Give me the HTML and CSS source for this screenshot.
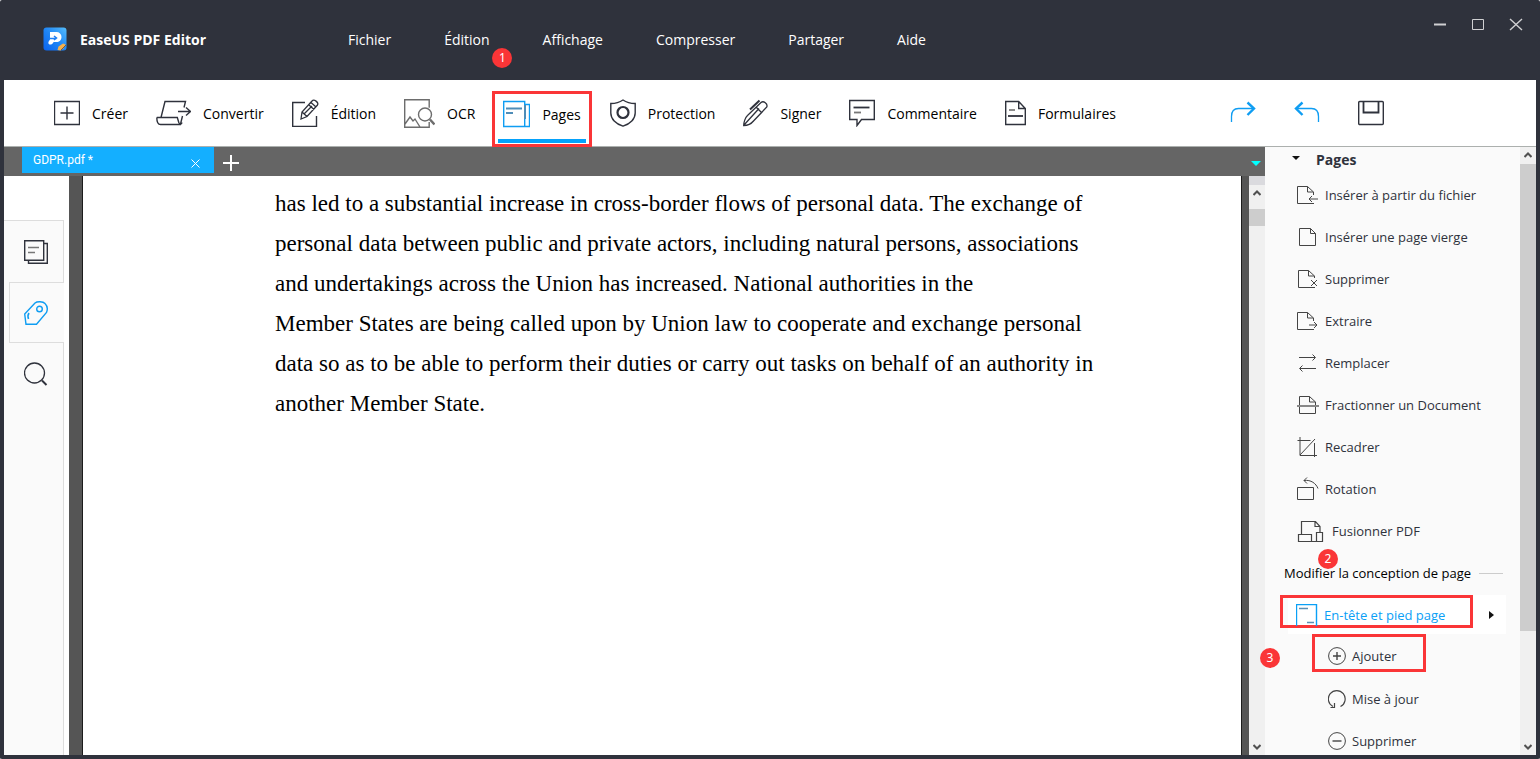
FILE: index.html
```html
<!DOCTYPE html>
<html lang="fr">

<head>
    <meta charset="UTF-8">
    <title>EaseUS PDF Editor</title>
    <link rel="stylesheet" href="styles.css">
</head>

<body>
    <div class="window">

        <header class="titlebar">
            <svg class="logo" width="24" height="24" viewBox="0 0 24 24">
                <defs>
                    <linearGradient id="logoBlue" x1="1" y1="0" x2="0" y2="1">
                        <stop offset="0" stop-color="#55bdfb"/>
                        <stop offset="0.5" stop-color="#1f86f5"/>
                        <stop offset="1" stop-color="#0b63ee"/>
                    </linearGradient>
                </defs>
                <rect x="0.5" y="0.5" width="23" height="23" rx="3" fill="url(#logoBlue)"/>
                <path d="M7 5h6.500a5 5 0 0 1 5 5c0 3-2.200 5-5 5H11c-1 0-1 2.500-3.500 2.500S5 15.500 6 14l1-1.500z" fill="#fff"/>
                <path d="M6 11.500h7.500M11 9l2.500 2-2.500 2" fill="none" stroke="#1f7ff3" stroke-width="1.500"/>
                <path d="M14.500 23l1-3.500 4.500-3 2.500 1-2 4-3 2z" fill="#f5b04c"/>
                <path d="M18 23l5-5" stroke="#7b5a3a" stroke-width="1"/>
            </svg>
            <h1 class="app-name">EaseUS PDF Editor</h1>
            <nav class="menu">
                <button>Fichier</button>
                <button>Édition</button>
                <button>Affichage</button>
                <button>Compresser</button>
                <button>Partager</button>
                <button>Aide</button>
            </nav>
            <div class="window-controls">
                <button aria-label="Réduire">
                    <svg width="14" height="14" viewBox="0 0 14 14"><path d="M1 7.500h12" stroke-width="2"/></svg>
                </button>
                <button aria-label="Agrandir">
                    <svg width="14" height="14" viewBox="0 0 14 14"><path d="M1.500 2.500h11v10h-11z"/></svg>
                </button>
                <button aria-label="Fermer">
                    <svg width="14" height="14" viewBox="0 0 14 14"><path d="M1 2l12 11M13 2L1 13" stroke-width="1.400"/></svg>
                </button>
            </div>
        </header>

        <div class="toolbar">
            <div class="tools">
                <button class="tool">
                    <svg width="26" height="28" viewBox="0 0 26 28"><path d="M.5 2.500h25v23H.5zM13 7.500v13M6.500 14h13" stroke-width="1.400"/></svg>
                    Créer
                </button>
                <button class="tool">
                    <svg width="35" height="28" viewBox="0 0 35 28"><path d="M5 18.500L9 2.500h20.500l-1.500 6M26.500 17l-2 8M.8 18.500h20.500l1.500 5c.8 2 2.700 2 3.200 0M.8 18.500c0 4 1.200 7 3.700 7H25M22 12.500h12M30 8.500l4.500 4-4.500 4" stroke-width="1.400"/></svg>
                    Convertir
                </button>
                <button class="tool">
                    <svg width="27" height="28" viewBox="0 0 27 28"><path d="M13 3.500H.7v24h23.800V17" stroke-width="1.400"/><path d="M9 20l1-7L20 2c2-2.500 7 1.500 5.500 4L15 17.500zM10 13l5 4.500M19 3.500l5 4.500M17 6l5 4.500M12 15l8-8" stroke-width="1.300"/></svg>
                    Édition
                </button>
                <button class="tool">
                    <svg width="31" height="30" viewBox="0 0 31 30" class="soft"><path d="M17 29.300H.7V1.700h24.500v8M25.200 24v5.300H17M1 26l5-7 3 4 2-2 5 8" stroke-width="1.400"/><circle cx="21" cy="16.500" r="6.500" stroke-width="1.400"/><path d="M26 21.500l4.500 5" stroke-width="2.500"/></svg>
                    OCR
                </button>
                <div class="tool-slot">
                    <button class="tool active">
                        <svg width="27" height="28" viewBox="0 0 27 28"><path d="M.7 1.500h21v25H.7zM22 4.500h4.500v22H20" stroke-width="1.400"/><path d="M3 8.500h16M3 13h7" stroke="#4f8db8" stroke-width="2"/><path d="M22 5v14" stroke="#4f8db8" stroke-width="2"/></svg>
                        Pages
                    </button>
                    <span class="badge badge-1">1</span>
                </div>
                <button class="tool">
                    <svg width="26" height="28" viewBox="0 0 26 28"><path d="M13 1C9 3.800 5 4.500.8 4.500V14c0 6 5 11 12.200 13.200C20.200 25 25.200 20 25.200 14V4.500C21 4.500 17 3.800 13 1z" stroke-width="1.400"/><circle cx="13" cy="13.500" r="5.500" stroke-width="2.200"/></svg>
                    Protection
                </button>
                <button class="tool">
                    <svg width="25" height="28" viewBox="0 0 25 28"><path d="M.7 26.500c0-3 1.500-8 3.800-10L18 3.500c2.500-2 7 1 5.800 4.500L10.500 22c-2 2.500-6.500 4.500-9.800 4.500zM1 26L16 9.500M13 8l5.500 5.500" stroke-width="1.300"/><path d="M7 10.500L16.500 1.500" stroke-width="2"/></svg>
                    Signer
                </button>
                <button class="tool">
                    <svg width="26" height="28" viewBox="0 0 26 28"><path d="M.7 1.500h24.600v19H12.500L8 26.500v-6H.7z" stroke-width="1.400"/><path d="M4.500 8.500h16" stroke-width="1.800"/><path d="M5 13.500h7" stroke-width="1.800" stroke="#777"/></svg>
                    Commentaire
                </button>
                <button class="tool">
                    <svg width="21" height="28" viewBox="0 0 21 28"><path d="M.7 2.500h13l6.600 7v16H.7zM13.700 2.500v7h6.600" stroke-width="1.400"/><path d="M4 11h6" stroke="#666" stroke-width="1.500"/><path d="M3 17h15" stroke-width="1.800"/></svg>
                    Formulaires
                </button>
            </div>
            <div class="quick">
                <button aria-label="Rétablir" class="blue">
                    <svg width="26" height="28" viewBox="0 0 26 28"><path d="M1.500 23v-5.500c0-5 2.500-8 7-8H24" stroke-width="1.300"/><path d="M17.500 3.500l6.500 6-6.500 6.500" stroke-width="2.400"/></svg>
                </button>
                <button aria-label="Annuler" class="blue">
                    <svg width="26" height="28" viewBox="0 0 26 28"><path d="M24.500 23v-5.500c0-5-2.500-8-7-8H2" stroke-width="1.300"/><path d="M8.500 3.500L2 9.500 8.500 16" stroke-width="2.400"/></svg>
                </button>
                <button aria-label="Enregistrer">
                    <svg width="26" height="28" viewBox="0 0 26 28"><rect x=".7" y="2.500" width="24.600" height="23" rx="1" stroke-width="1.400"/><path d="M5.500 2.500v11h15v-11" stroke-width="1.800"/></svg>
                </button>
            </div>
        </div>

        <main class="workspace">
            <section class="viewer">
                <div class="tabs">
                    <div class="tab">
                        <span>GDPR.pdf *</span>
                        <button aria-label="Fermer l'onglet">
                            <svg width="9" height="9" viewBox="0 0 9 9"><path d="M.5.5l8 8M8.500.5l-8 8"/></svg>
                        </button>
                    </div>
                    <button class="new-tab" aria-label="Nouvel onglet">
                        <svg width="16" height="16" viewBox="0 0 16 16"><path d="M8 0v16M0 8h16" stroke-width="2"/></svg>
                    </button>
                    <button class="tab-list" aria-label="Liste des onglets">
                        <svg width="10" height="5" viewBox="0 0 10 5"><path d="M0 0h10L5 5z"/></svg>
                    </button>
                </div>

                <div class="document">
                    <nav class="sidebar">
                        <button aria-label="Vignettes">
                            <svg width="24" height="24" viewBox="0 0 24 24"><path d="M.7.7h19v19.600H.7zM20 3.500h3.300v19.800H4.500V20.500" stroke-width="1.400"/><path d="M4 7.500h11M4 12.500h7" stroke="#777" stroke-width="1.500"/></svg>
                        </button>
                        <button aria-label="Signets" class="selected">
                            <svg width="24" height="24" viewBox="0 0 24 24"><path d="M2 23.300L.7 13 11 2c2-1.800 8-1.800 10 .5 2.500 2.500 2.500 6.500 1.500 9L12.500 23.300z" stroke-width="1.400"/><circle cx="15.500" cy="8" r="2.800" stroke-width="1.400"/><path d="M5 12c-1.500 2-1.200 4-.5 6" stroke-width="1.600"/></svg>
                        </button>
                        <button aria-label="Rechercher">
                            <svg width="24" height="24" viewBox="0 0 24 24"><circle cx="10.500" cy="11" r="10" stroke-width="1.300"/><path d="M18 18.500l4.500 4.500" stroke-width="2"/></svg>
                        </button>
                    </nav>
                    <article class="page">
                        <p>
                            has led to a substantial increase in cross-border flows of personal data. The exchange of<br>
                            personal data between public and private actors, including natural persons, associations<br>
                            and undertakings across the Union has increased. National authorities in the<br>
                            Member States are being called upon by Union law to cooperate and exchange personal<br>
                            data so as to be able to perform their duties or carry out tasks on behalf of an authority in<br>
                            another Member State.
                        </p>
                    </article>
                    <div class="scrollbar doc-scroll">
                        <button aria-label="Défiler vers le haut"><svg width="8" height="6" viewBox="0 0 8 6"><path d="M.5 5L4 1.500 7.500 5"/></svg></button>
                        <div class="thumb"></div>
                        <button aria-label="Défiler vers le bas" class="down"><svg width="8" height="6" viewBox="0 0 8 6"><path d="M.5 1L4 4.500 7.500 1"/></svg></button>
                    </div>
                </div>
            </section>

            <aside class="panel">
                <div class="panel-content">
                    <h2 class="panel-title">
                        <svg width="8" height="10" viewBox="0 0 8 10"><path d="M0 1h8L4 5z"/></svg>
                        Pages
                    </h2>
                    <button class="item">
                        <svg width="22" height="20" viewBox="0 0 22 20"><path d="M17 18.500H.5V1.500h10L16.500 7v3M10.500 1.500V7h6M12 14h9M15 11l-3 3 3 3"/></svg>
                        Insérer à partir du fichier
                    </button>
                    <button class="item">
                        <svg width="22" height="20" viewBox="0 0 22 20"><path d="M2.500 1.500h11l5 5v12h-16zM13.500 1.500v5h5"/></svg>
                        Insérer une page vierge
                    </button>
                    <button class="item">
                        <svg width="22" height="20" viewBox="0 0 22 20"><path d="M18 18.500H1.500V1.500h10l6 5.500v2M11.500 1.500V7h6M14 11l6 6M20 11l-6 6"/></svg>
                        Supprimer
                    </button>
                    <button class="item">
                        <svg width="22" height="20" viewBox="0 0 22 20"><path d="M17 18.500H.5V1.500h10L16.500 7v3M10.500 1.500V7h6M12 14h8M17 11l3 3-3 3"/></svg>
                        Extraire
                    </button>
                    <button class="item">
                        <svg width="22" height="20" viewBox="0 0 22 20"><path d="M2 4.500h16M15.500 1.500l3 3-3 3M3 15.500h16M5.500 12.500l-3 3 3 3"/></svg>
                        Remplacer
                    </button>
                    <button class="item">
                        <svg width="22" height="20" viewBox="0 0 22 20"><path d="M2.500 1.500h10l6 5.500v11.500h-16zM12.500 1.500V7h6"/><path d="M0 11h22" stroke="#888" stroke-width="2"/></svg>
                        Fractionner un Document
                    </button>
                    <button class="item">
                        <svg width="22" height="22" viewBox="0 0 22 22"><path d="M3 1v18.500h17M.5 4.500h13M17.500 7v14M3 19L18 3"/></svg>
                        Recadrer
                    </button>
                    <button class="item">
                        <svg width="22" height="24" viewBox="0 0 22 24"><path d="M.5 10.500h16v12H.5zM7 3.500c7-1 12 3 14 8M10 .5L7 3.500l3 3"/></svg>
                        Rotation
                    </button>
                    <button class="item">
                        <svg width="29" height="24" viewBox="0 0 29 24"><path d="M4.500 15V2.500h14l4.500 5v6M18 2.500v5h5M1.500 15.500h13v7h-13zM14.500 22.500h5v-9h6v9h-6" stroke-width="1.200"/></svg>
                        Fusionner PDF
                    </button>

                    <h3 class="group-title">
                        Modifier la conception de page
                        <span class="badge badge-2">2</span>
                    </h3>

                    <div class="expanded">
                        <button class="item current">
                            <svg width="22" height="22" viewBox="0 0 22 22"><path d="M.5 22V.5h20V22" stroke-width="1.400"/><path d="M3 4.500h9M11 18.500h7" stroke="#5a8fb5" stroke-width="1.600"/></svg>
                            En-tête et pied page
                        </button>
                        <svg class="arrow" width="5" height="8" viewBox="0 0 5 8"><path d="M0 0v8l5-4z"/></svg>
                    </div>

                    <div class="sub-slot">
                        <button class="item sub">
                            <svg width="18" height="18" viewBox="0 0 18 18"><circle cx="9" cy="9" r="8.400"/><path d="M9 5v8M5 9h8" stroke-width="1.400"/></svg>
                            Ajouter
                        </button>
                        <span class="badge badge-3">3</span>
                    </div>
                    <button class="item sub">
                        <svg width="18" height="20" viewBox="0 0 18 20"><path d="M12.500 17.500A8.400 8.400 0 1 0 5 17.500M6.500 14v4.500H2.500" stroke-width="1.200"/></svg>
                        Mise à jour
                    </button>
                    <button class="item sub">
                        <svg width="18" height="18" viewBox="0 0 18 18"><circle cx="9" cy="9" r="8.400"/><path d="M4.500 9h9" stroke-width="1.400"/></svg>
                        Supprimer
                    </button>
                </div>
                <div class="scrollbar panel-scroll">
                    <button aria-label="Défiler vers le haut"><svg width="8" height="6" viewBox="0 0 8 6"><path d="M.5 5L4 1.500 7.500 5"/></svg></button>
                    <div class="thumb"></div>
                    <button aria-label="Défiler vers le bas" class="down"><svg width="8" height="6" viewBox="0 0 8 6"><path d="M.5 1L4 4.500 7.500 1"/></svg></button>
                </div>
            </aside>
        </main>
    </div>
</body>

</html>
```
FILE: styles.css
```css
* {
    box-sizing: border-box;
}

body {
    margin: 0;
    font-family: "Open Sans", "Noto Sans", sans-serif;
    font-size: 14px;
    color: #000;
}

button {
    padding: 0;
    border: none;
    background: none;
    font: inherit;
    color: inherit;
    white-space: nowrap;
    cursor: pointer;
}

svg {
    display: block;
    flex: none;
    fill: none;
    stroke: #2f323c;
}

.window {
    display: flex;
    flex-direction: column;
    height: 100vh;
    border: 4px solid #2f323c;
    border-top: none;
    border-radius: 2px;
    background: #fff;
    overflow: hidden;
}

/* title bar */
.titlebar {
    display: flex;
    align-items: center;
    flex: none;
    height: 80px;
    padding: 0 13px 2px 39px;
    background: #2f323c;
    color: #fff;
}

.logo {
    stroke: none;
}

.app-name {
    width: 281px;
    margin: 0;
    padding-left: 13px;
    font-size: 14px;
    font-weight: 700;
}

.menu {
    display: flex;
    gap: 53px;
    flex: 1;
}

.window-controls {
    display: flex;
    gap: 24px;
    align-self: flex-start;
    padding-top: 17px;
}

.window-controls svg {
    stroke: #d0d0d2;
}

/* toolbar */
.toolbar {
    display: flex;
    justify-content: space-between;
    flex: none;
    height: 67px;
    padding: 0 152px 0 50px;
    border-bottom: 1px solid #acb0ae;
}

.tools {
    display: flex;
    align-items: center;
    gap: 28px;
}

.tool {
    display: flex;
    align-items: center;
    gap: 12px;
}

.soft {
    stroke: #6d6d6d;
}

.tool-slot {
    position: relative;
    align-self: flex-end;
    margin: 0 -10px -1px -11px;
    border: 3px solid #fa3537;
}

.tool.active {
    height: 49px;
    margin: 0 3px 1px;
    padding: 0 5px 5px;
    border-bottom: 4px solid #05a2fb;
}

.active svg,
.blue svg,
.selected svg,
.current svg {
    stroke: #0f9df2;
}

.quick {
    display: flex;
    align-items: center;
    gap: 38px;
}

.badge {
    position: absolute;
    width: 20px;
    height: 20px;
    border-radius: 50%;
    background: #fa3537;
    color: #fff;
    font-family: "Noto Sans", sans-serif;
    font-size: 12px;
    font-weight: 400;
    line-height: 20px;
    text-align: center;
}

.badge-1 {
    top: -46px;
    left: -3px;
}

.badge-2 {
    top: -3px;
    left: 34px;
}

.badge-3 {
    top: 14px;
    left: -5px;
}

/* workspace */
.workspace {
    display: flex;
    flex: 1;
    min-height: 0;
}

.viewer {
    display: flex;
    flex-direction: column;
    flex: 1;
    min-width: 0;
}

.tabs {
    display: flex;
    flex: none;
    height: 29px;
    padding-left: 18px;
    background: #656565;
}

.tab {
    display: flex;
    justify-content: space-between;
    width: 192px;
    height: 26px;
    padding: 0 14px 0 11px;
    background: #14afff;
    color: #fff;
    font-family: Roboto, sans-serif;
    font-size: 12px;
    line-height: 26px;
}

.tabs svg {
    stroke: #fff;
}

.tab button {
    padding-top: 6px;
}

.new-tab {
    margin-left: 9px;
    padding-top: 2px;
}

.tab-list {
    margin-left: auto;
    padding: 4px 4px 0 0;
}

.tab-list svg {
    fill: #0ff;
    stroke: none;
}

.document {
    display: flex;
    flex: 1;
    min-height: 0;
    background: #555;
}

.sidebar {
    display: flex;
    flex-direction: column;
    width: 65px;
    padding-top: 45px;
    background: linear-gradient(#fff 44px, #ddd 44px, #ddd 45px, #fafafa 45px);
    border-right: 5px solid #fff;
}

.sidebar::after {
    content: "";
    flex: 1;
    border-right: 1px solid #ddd;
}

.sidebar button {
    display: flex;
    align-items: center;
    width: 60px;
    height: 61px;
    padding-left: 20px;
    border-right: 1px solid #ddd;
}

.sidebar .selected {
    width: 55px;
    margin-left: 5px;
    padding-left: 14px;
    border: 1px solid #ddd;
    border-right: none;
}

.page {
    flex: 1;
    margin: 0 7px 0 13px;
    padding-left: 192px;
    border: solid #1c1c1c;
    border-width: 0 1px;
    background: #fff;
    font-family: "Liberation Serif", serif;
    font-size: 23px;
    line-height: 40px;
    white-space: nowrap;
}

.page p {
    margin: 8px 0;
}

.scrollbar {
    display: flex;
    flex-direction: column;
    flex: none;
    width: 16px;
    background: #f0f0f0;
}

.scrollbar button {
    display: flex;
    align-items: center;
    justify-content: center;
    height: 16px;
}

.scrollbar svg {
    stroke: #505050;
    stroke-width: 2;
}

.scrollbar .down {
    margin-top: auto;
}

.thumb {
    background: #cdcdcd;
}

.doc-scroll {
    border-top: 9px solid #dadade;
}

.doc-scroll .thumb {
    height: 17px;
    margin-top: 8px;
}

/* right panel */
.panel {
    display: flex;
    width: 271px;
    background: #fafafa;
}

.panel-content {
    flex: 1;
    height: 0;
}

.panel-title {
    display: flex;
    align-items: center;
    gap: 16px;
    height: 27px;
    margin: 0;
    padding: 0 0 2px 27px;
    color: #2f323c;
    font-size: 14px;
}

.panel-title svg,
.arrow {
    fill: #111;
    stroke: none;
}

.item {
    display: flex;
    align-items: center;
    gap: 6px;
    height: 42px;
    padding-left: 32px;
    color: #2f323c;
    font-size: 13px;
}

.item svg {
    stroke: #444;
}

.group-title {
    display: flex;
    align-items: center;
    gap: 8px;
    position: relative;
    height: 42px;
    margin: 0 17px 0 19px;
    font-size: 13px;
    font-weight: 400;
    white-space: nowrap;
}

.group-title::after {
    content: "";
    flex: 1;
    height: 1px;
    background: #ccc;
}

.expanded {
    display: flex;
    align-items: center;
    justify-content: space-between;
    height: 39px;
    margin: 1px 14px 0 23px;
    padding-right: 12px;
    background: #fff;
}

.item.current {
    align-self: flex-start;
    width: 193px;
    height: 33px;
    margin-left: -8px;
    padding: 6px 0 0 13px;
    border: 3px solid #fa3537;
    color: #0aa0f6;
}

.item.current svg {
    stroke: #0aa0f6;
}

.sub-slot {
    position: relative;
}

.item.sub {
    padding-left: 63px;
}

.sub-slot .item {
    width: 114px;
    height: 38px;
    margin: 0 0 6px 47px;
    padding: 6px 0 0 13px;
    border: 3px solid #fa3537;
}

.panel-scroll .thumb {
    height: 467px;
    margin-top: 1px;
}
```
